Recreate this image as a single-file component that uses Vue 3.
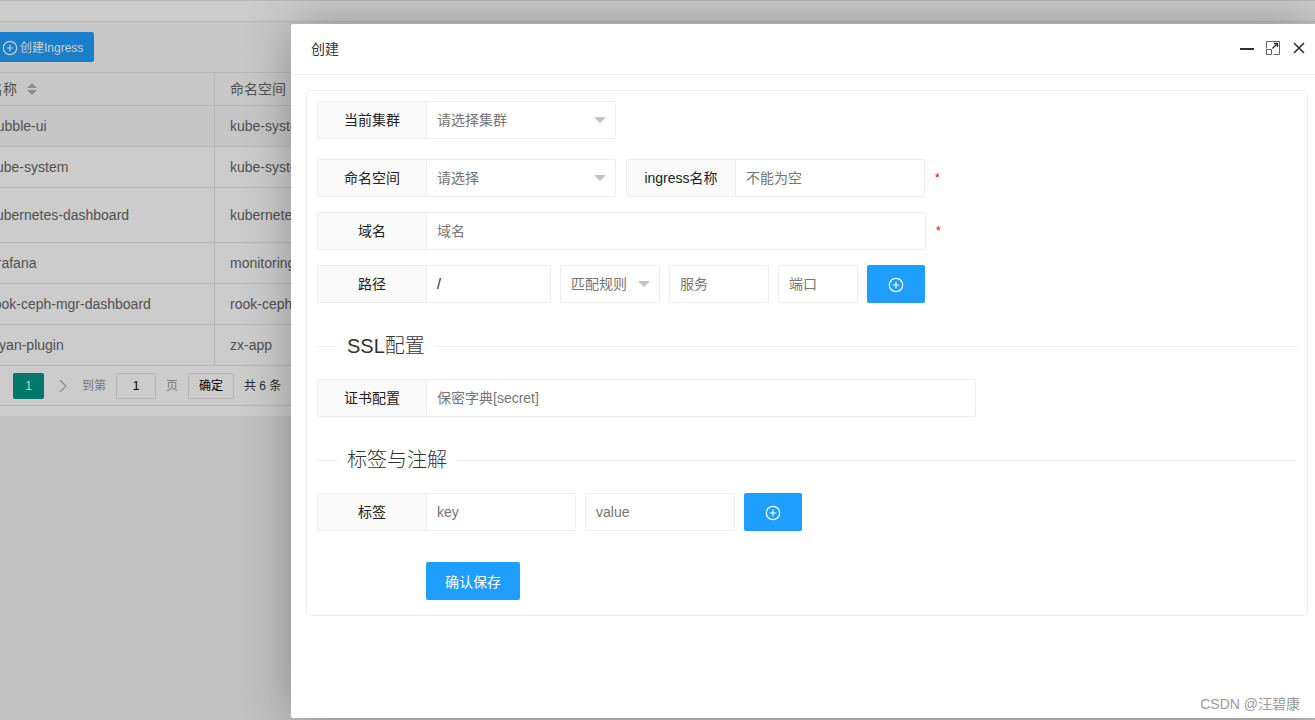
<script setup>
import { ref } from 'vue'

const rows = [
  { name: 'hubble-ui', ns: 'kube-system', active: true },
  { name: 'kube-system', ns: 'kube-system' },
  { name: 'kubernetes-dashboard', ns: 'kubernetes-dashboard', tall: true },
  { name: 'grafana', ns: 'monitoring' },
  { name: 'rook-ceph-mgr-dashboard', ns: 'rook-ceph' },
  { name: 'ziyan-plugin', ns: 'zx-app' },
]
const page = ref('1')
const path = ref('/')
const cluster = ref('')
const namespace = ref('')
const rule = ref('')
</script>

<template>
  <div class="page">
    <main class="list">
      <div class="tabs"></div>
      <div class="toolbar">
        <button type="button" class="create">
          <svg viewBox="0 0 16 16" class="plus"><circle cx="8" cy="8" r="6.700" /><path d="M8 4.800v6.400M4.800 8h6.400" /></svg>
          <span>创建Ingress</span>
        </button>
      </div>
      <div class="table-wrap">
        <table>
          <thead>
            <tr>
              <th class="c-name">
                <span>名称</span>
                <svg class="sort" viewBox="0 0 10 12"><path d="M5 0l5 5H0zM0 7h10l-5 5z" /></svg>
              </th>
              <th>命名空间</th>
            </tr>
          </thead>
          <tbody>
            <tr v-for="r in rows" :key="r.name" :class="{ active: r.active, tall: r.tall }">
              <td>{{ r.name }}</td>
              <td>{{ r.ns }}</td>
            </tr>
          </tbody>
        </table>
      </div>
      <nav class="pager">
        <button type="button" class="current">1</button>
        <button type="button" class="next" aria-label="下一页">
          <svg viewBox="0 0 8 12"><path d="M1 0l6 6-6 6" /></svg>
        </button>
        <label for="page-no">到第</label>
        <input id="page-no" v-model="page" type="text">
        <span class="muted">页</span>
        <button type="button" class="go">确定</button>
        <span class="total">共 6 条</span>
      </nav>
      <div class="list-foot"></div>
    </main>

    <div class="shade"></div>

    <section class="dialog" role="dialog" aria-labelledby="dlg-title">
      <header>
        <h1 id="dlg-title">创建</h1>
        <div class="win">
          <button type="button" aria-label="最小化">
            <svg viewBox="0 0 16 16"><path d="M1 9h14" stroke-width="2" /></svg>
          </button>
          <button type="button" aria-label="最大化">
            <svg viewBox="0 0 16 16"><path d="M1.500 8.500v-7h13v13h-6M1.500 9.500h5v5h-5z" stroke-opacity="0.750" /><path d="M7.500 8.500l5-5M9 3.500h3.500V7" stroke-width="1.300" /></svg>
          </button>
          <button type="button" aria-label="关闭">
            <svg viewBox="0 0 16 16"><path d="M3 3l10 10M13 3L3 13" stroke-width="1.600" /></svg>
          </button>
        </div>
      </header>

      <form class="panel" @submit.prevent>
        <div class="row first">
          <div class="group">
            <label for="cluster">当前集群</label>
            <div class="select w190">
              <select id="cluster" v-model="cluster"><option value="">请选择集群</option></select>
            </div>
          </div>
        </div>
        <div class="row wide">
          <div class="group">
            <label for="namespace">命名空间</label>
            <div class="select w190">
              <select id="namespace" v-model="namespace"><option value="">请选择</option></select>
            </div>
          </div>
          <div class="group">
            <label for="ing-name">ingress名称</label>
            <input id="ing-name" class="w190" type="text" placeholder="不能为空">
          </div>
          <span class="req">*</span>
        </div>
        <div class="row wide">
          <div class="group">
            <label for="domain">域名</label>
            <input id="domain" class="w500" type="text" placeholder="域名">
          </div>
          <span class="req">*</span>
        </div>
        <div class="row">
          <div class="group">
            <label for="path">路径</label>
            <input id="path" v-model="path" class="w125" type="text">
          </div>
          <div class="select w100">
            <select v-model="rule" aria-label="匹配规则"><option value="">匹配规则</option></select>
          </div>
          <input class="w100" type="text" placeholder="服务" aria-label="服务">
          <input class="w80" type="text" placeholder="端口" aria-label="端口">
          <button type="button" class="primary add" aria-label="添加路径">
            <svg viewBox="0 0 16 16" class="plus"><circle cx="8" cy="8" r="6.700" /><path d="M8 4.800v6.400M4.800 8h6.400" /></svg>
          </button>
        </div>

        <h2>SSL配置</h2>
        <div class="row">
          <div class="group">
            <label for="secret">证书配置</label>
            <input id="secret" class="w550" type="text" placeholder="保密字典[secret]">
          </div>
        </div>

        <h2>标签与注解</h2>
        <div class="row">
          <div class="group">
            <label for="tag-key">标签</label>
            <input id="tag-key" class="w150" type="text" placeholder="key">
          </div>
          <input class="w150" type="text" placeholder="value" aria-label="value">
          <button type="button" class="primary add" aria-label="添加标签">
            <svg viewBox="0 0 16 16" class="plus"><circle cx="8" cy="8" r="6.700" /><path d="M8 4.800v6.400M4.800 8h6.400" /></svg>
          </button>
        </div>
        <button type="submit" class="primary save">确认保存</button>
      </form>
    </section>

    <span class="watermark">CSDN @汪碧康</span>
  </div>
</template>

<style>
body {
  background: #f2f2f2;
}
</style>

<style scoped>
.page {
  position: relative;
  height: 100vh;
  overflow: hidden;
  font: 14px/24px "Liberation Sans", "Noto Sans CJK SC", sans-serif;
  color: #333;
}
.page * {
  box-sizing: border-box;
}
button,
input,
select {
  margin: 0;
  font: inherit;
  color: inherit;
  outline: none;
}
button {
  display: flex;
  align-items: center;
  justify-content: center;
  padding: 0;
  border: 0;
  background: none;
}
svg {
  display: block;
  fill: none;
  stroke: currentColor;
}
.plus {
  width: 16px;
  height: 16px;
  stroke-width: 1.200;
}

/* list behind the dialog */
.list {
  background: #fff;
}
.tabs {
  height: 22px;
  border: solid #e6e6e6;
  border-width: 1px 0;
}
.toolbar {
  padding: 10px 0;
  background: #fafafa;
}
.create {
  width: 94px;
  height: 30px;
  justify-content: flex-start;
  gap: 2px;
  padding: 2px 0 0 2px;
  border-radius: 0 2px 2px 0;
  background: #1e9fff;
  color: #fff;
  font-size: 12px;
  white-space: nowrap;
}
.table-wrap {
  overflow: hidden;
  border-top: 1px solid #e6e6e6;
}
table {
  width: 100%;
  margin-left: -26px;
  border-collapse: separate;
  border-spacing: 0;
  table-layout: fixed;
  color: #666;
}
th,
td {
  height: 41px;
  padding: 0 15px;
  border: solid #e6e6e6;
  border-width: 0 1px 1px 0;
  text-align: left;
  font-weight: 400;
  white-space: nowrap;
}
th {
  height: 33px;
  background: #fafafa;
}
.c-name {
  width: 241px;
}
.sort {
  display: inline-block;
  width: 10px;
  height: 12px;
  margin-left: 10px;
  vertical-align: -1px;
  fill: #b2b2b2;
  stroke: none;
}
.active td {
  background: #f8f8f8;
}
.tall td {
  height: 55px;
}
.pager {
  display: flex;
  align-items: center;
  gap: 10px;
  height: 40px;
  padding-left: 13px;
  border-bottom: 1px solid #e6e6e6;
  font-size: 12px;
}
.current {
  width: 31px;
  height: 26px;
  border-radius: 2px;
  background: #009688;
  color: #fff;
}
.next {
  width: 18px;
  height: 26px;
  color: #bbb;
}
.next svg {
  width: 8px;
  height: 12px;
  stroke-width: 1.500;
}
.pager label,
.muted {
  color: #999;
}
.pager input,
.go {
  width: 40px;
  height: 26px;
  border: 1px solid #e2e2e2;
  border-radius: 2px;
  background: #fff;
  text-align: center;
  color: #000;
}
.go {
  width: 46px;
}
.list-foot {
  height: 10px;
}
.shade {
  position: absolute;
  inset: 0;
  background: rgba(0, 0, 0, 0.2);
}

/* dialog */
.dialog {
  position: absolute;
  inset: 24px 0 2px 291px;
  border-radius: 2px 0 0 2px;
  background: #fff;
  box-shadow: 1px 1px 50px rgba(0, 0, 0, 0.3);
}
header {
  display: flex;
  align-items: center;
  justify-content: space-between;
  height: 51px;
  padding: 0 8px 0 20px;
  border-bottom: 1px solid #eee;
}
h1 {
  margin: 0;
  font-size: 14px;
  font-weight: 400;
}
.win {
  display: flex;
  gap: 10px;
  padding-bottom: 2px;
  color: #2e2d3c;
}
.win svg {
  width: 16px;
  height: 16px;
}
.panel {
  margin: 15px 7px 0 15px;
  padding: 10px 10px 15px;
  border: 1px solid #eee;
  border-radius: 5px;
}
.row {
  display: flex;
  gap: 9px;
  margin-bottom: 15px;
}
.wide {
  gap: 10px;
}
.first {
  margin-bottom: 20px;
}
.group {
  display: flex;
}
.group label {
  width: 110px;
  height: 38px;
  border: 1px solid #eee;
  border-radius: 2px 0 0 2px;
  background: #fafafa;
  line-height: 36px;
  text-align: center;
  color: #222;
}
.group label + * {
  margin-left: -1px;
}
.panel input,
.panel select {
  height: 38px;
  padding: 0 10px;
  border: 1px solid #eee;
  border-radius: 2px;
  background: #fff;
  color: #222;
}
.panel input::placeholder {
  color: #757575;
  opacity: 1;
}
.select {
  position: relative;
}
.panel select {
  width: 100%;
  appearance: none;
  color: #757575;
}
.select::after {
  content: "";
  position: absolute;
  top: 16px;
  right: 10px;
  border: 6px solid transparent;
  border-top-color: #c2c2c2;
  border-bottom-width: 0;
  pointer-events: none;
}
.w80 { width: 80px; }
.w100 { width: 100px; }
.w125 { width: 125px; }
.w150 { width: 150px; }
.w190 { width: 190px; }
.w500 { width: 500px; }
.w550 { width: 550px; }
.req {
  font-size: 12px;
  line-height: 38px;
  color: #f00;
}
.primary {
  height: 38px;
  padding-top: 2px;
  border-radius: 2px;
  background: #1e9fff;
  color: #fff;
}
.add {
  width: 58px;
}
h2 {
  display: flex;
  align-items: center;
  gap: 10px;
  height: 26px;
  margin: 30px 0 20px;
  font-size: 20px;
  font-weight: 300;
}
h2::before,
h2::after {
  content: "";
  width: 20px;
  border-top: 1px solid #eee;
}
h2::after {
  flex: 1;
}
.save {
  width: 94px;
  margin: 31px 0 0 109px;
}
.watermark {
  position: absolute;
  right: 15px;
  bottom: 4px;
  font-size: 14px;
  color: #999;
}
</style>
